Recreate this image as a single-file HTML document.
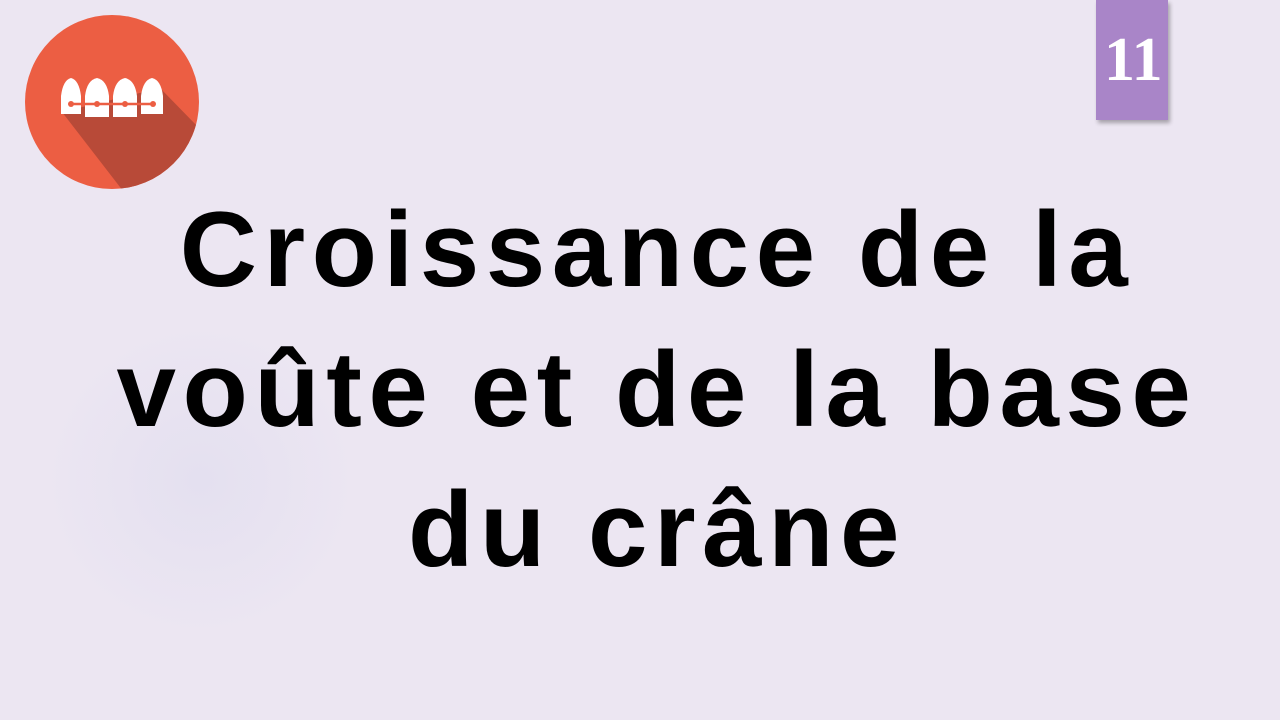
<!DOCTYPE html>
<html><head><style>
body{margin:0;width:1280px;height:720px;overflow:hidden;background:#ece6f2;position:relative;font-family:"Liberation Sans",sans-serif}
.t{position:absolute;left:0;width:1314px;text-align:center;font-weight:bold;font-size:107px;color:#000;line-height:140px;letter-spacing:6.5px}
.badge{position:absolute;left:1096px;top:0;width:72px;height:120px;background:#a985c8;box-shadow:2px 3px 4px rgba(0,0,0,.3);overflow:hidden}
.badge span{position:absolute;left:8px;top:30px;font-family:"Liberation Serif",serif;font-weight:bold;font-size:62px;color:#fff;line-height:60px}
</style></head><body>
<div style="position:absolute;left:40px;top:320px;width:320px;height:320px;border-radius:50%;background:radial-gradient(#e4e0f0,rgba(236,230,242,0) 70%)"></div>
<svg style="position:absolute;left:0;top:0" width="220" height="210">
<defs><clipPath id="c"><circle cx="112" cy="102" r="87"/></clipPath></defs>
<circle cx="112" cy="102" r="87" fill="#ec5e43"/>
<polygon clip-path="url(#c)" points="62,112 160,88 240,170 200,240 130,200" fill="#b84a38"/>
<g fill="#fff">
<path d="M61,114 L61,96 Q63,80 71,78 Q79,80 81,96 L81,114 Z"/>
<path d="M85,117 L85,96 Q87,80 97,78 Q107,80 109,96 L109,117 Z"/>
<path d="M113,117 L113,96 Q115,80 125,78 Q135,80 137,96 L137,117 Z"/>
<path d="M141,114 L141,96 Q143,80 152,78 Q161,80 163,96 L163,114 Z"/>
</g>
<line x1="70" y1="104" x2="155" y2="104" stroke="#ec5e43" stroke-width="2.5"/>
<g fill="#ec5e43"><circle cx="71" cy="104" r="3"/><circle cx="97" cy="104" r="3"/><circle cx="125" cy="104" r="3"/><circle cx="153" cy="104" r="3"/></g>
</svg>
<div class="badge"><span>11</span></div>
<div class="t" style="top:179px">Croissance de la</div>
<div class="t" style="top:319px">voûte et de la base</div>
<div class="t" style="top:459px">du crâne</div>
</body></html>
